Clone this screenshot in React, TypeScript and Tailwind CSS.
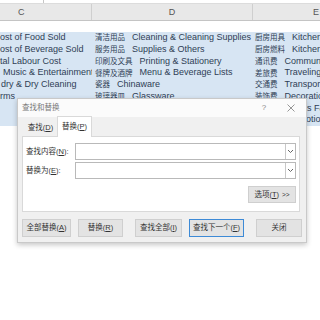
const rows = [
  { c: 'ost of Food Sold', cPad: 0, d: ['清洁用品', 'Cleaning & Cleaning Supplies'], e: ['厨房用具', 'Kitchen Utensils'] },
  { c: 'ost of Beverage Sold', cPad: 0, d: ['服务用品', 'Supplies & Others'], e: ['厨房燃料', 'Kitchen Fuel'] },
  { c: 'tal Labour Cost', cPad: 0, d: ['印刷及文具', 'Printing & Stationery'], e: ['通讯费', 'Communication'] },
  { c: 'Music & Entertainment', cPad: 3, d: ['餐牌及酒牌', 'Menu & Beverage Lists'], e: ['差旅费', 'Traveling'] },
  { c: 'dry & Dry Cleaning', cPad: 1, d: ['瓷器', 'Chinaware'], e: ['交通费', 'Transportation'] },
  { c: 'rms', cPad: 0, d: ['玻璃器皿', 'Glassware'], e: ['装饰费', 'Decoration'] },
  { c: '', cPad: 0, d: ['', ''], e: ['杂项费', 'Others F&B'] },
  { c: '', cPad: 0, d: ['', ''], e: ['推广费', 'Promotion Items'] },
];

const Cell = ({ zh, en, className }: { zh: string; en: string; className: string }) => (
  <div className={`overflow-hidden whitespace-nowrap flex items-center ${className}`}>
    {zh && <span className="text-[7.5px] mr-[7px]">{zh}</span>}
    <span>{en}</span>
  </div>
);

const Key = ({ k }: { k: string }) => (
  <>
    (<span className="underline underline-offset-1">{k}</span>)
  </>
);

const Chevron = () => (
  <svg width="7" height="5" viewBox="0 0 7 5" className="text-[#666]">
    <polyline points="1,1 3.5,3.5 6,1" fill="none" stroke="currentColor" strokeWidth="1" />
  </svg>
);

const Combo = () => (
  <div className="w-[221px] h-[17px] bg-white border border-[#b9b9b9] flex justify-end">
    <div className="w-[10px] h-full border-l border-[#c8c8c8] flex items-center justify-center">
      <Chevron />
    </div>
  </div>
);

const Btn = ({ children, className }: { children: React.ReactNode; className: string }) => (
  <div className={`h-[18px] flex items-center justify-center bg-[#e3e3e3] border ${className}`}>{children}</div>
);

export default function App() {
  return (
    <div className="relative w-[320px] h-[320px] overflow-hidden bg-white text-[9px] text-[#2f3e55] font-['Liberation_Sans','Noto_Sans_CJK_SC',sans-serif]">
      {/* formula bar edge */}
      <div className="h-[4px] flex border-b border-[#dcdcdc]">
        <div className="w-[44px] border-r border-[#c6c6c6]" />
      </div>

      {/* column headers */}
      <div className="h-[17px] flex bg-[#e8e8e8] border-b border-[#c4c4c4] text-[#555] text-[9px]">
        <div className="w-[92px] border-r border-[#cfcfcf] pl-[18px] flex items-end pb-[1px]">C</div>
        <div className="w-[161px] border-r border-[#cfcfcf] flex items-end justify-center pb-[1px]">D</div>
        <div className="flex-1 pl-[60px] flex items-end pb-[1px]">E</div>
      </div>

      <div className="h-[11px]" />

      {/* selected block */}
      <div className="bg-[#d7e5f3]">
        {rows.map((r, i) => (
          <div key={i} className="h-[11.75px] flex">
            <div className="w-[92px] overflow-hidden whitespace-nowrap flex items-center" style={{ paddingLeft: r.cPad }}>
              {r.c}
            </div>
            <Cell zh={r.d[0]} en={r.d[1]} className="w-[161px] pl-[3px]" />
            <Cell zh={r.e[0]} en={r.e[1]} className="flex-1 pl-[2px]" />
          </div>
        ))}
      </div>

      {/* find & replace dialog */}
      <div className="absolute left-[17px] top-[98px] w-[290px] h-[145px] bg-[#f0f0f0] border border-[#c9c9c9] shadow-[0_2px_5px_rgba(0,0,0,0.22)] text-[7.5px] text-[#333] flex flex-col">
        <div className="h-[18px] bg-[#fbfbfb] flex items-center justify-between pl-[4px] pr-[11px]">
          <span className="text-[#7a7a7a]">查找和替换</span>
          <div className="flex items-center text-[#8a8a8a]">
            <span className="w-[10px] text-center text-[8px]">?</span>
            <svg width="8" height="8" viewBox="0 0 8 8" className="ml-[18px]">
              <path d="M0.5 0.5 L7.5 7.5 M7.5 0.5 L0.5 7.5" stroke="#8a8a8a" strokeWidth="0.9" />
            </svg>
          </div>
        </div>

        <div className="h-[20px] flex items-end pl-[6px] -mb-px relative z-10">
          <div className="w-[33px] h-[19px] flex items-center justify-center">
            查找<Key k="D" />
          </div>
          <div className="w-[35px] h-[21px] bg-white border border-b-0 border-[#d9d9d9] flex items-center justify-center">
            替换<Key k="P" />
          </div>
        </div>

        <div className="ml-[4px] w-[278px] h-[76px] bg-white border border-[#d9d9d9] pl-[3px] pr-[3px] flex flex-col">
          <div className="mt-[6px] flex items-center">
            <span className="w-[49px] whitespace-nowrap">
              查找内容<Key k="N" />:
            </span>
            <Combo />
          </div>
          <div className="mt-[2px] flex items-center">
            <span className="w-[49px] whitespace-nowrap">
              替换为<Key k="E" />:
            </span>
            <Combo />
          </div>
          <div className="mt-[7px] flex justify-end">
            <div className="w-[48px] h-[17px] bg-[#e3e3e3] border border-[#cfcfcf] flex items-center justify-center whitespace-nowrap">
              选项<Key k="T" />
              <span className="ml-[3px] text-[6.5px]">&gt;&gt;</span>
            </div>
          </div>
        </div>

        <div className="mt-[7px] flex">
          <Btn className="ml-[4px] w-[49px] border-[#cfcfcf]">
            全部替换<Key k="A" />
          </Btn>
          <Btn className="ml-[7px] w-[45px] border-[#cfcfcf]">
            替换<Key k="R" />
          </Btn>
          <Btn className="ml-[12px] w-[47px] border-[#cfcfcf]">
            查找全部<Key k="I" />
          </Btn>
          <Btn className="ml-[7px] w-[55px] border-[#3d8ad6]">
            查找下一个<Key k="F" />
          </Btn>
          <Btn className="ml-[12px] w-[46px] border-[#cfcfcf]">关闭</Btn>
        </div>
      </div>
    </div>
  );
}
